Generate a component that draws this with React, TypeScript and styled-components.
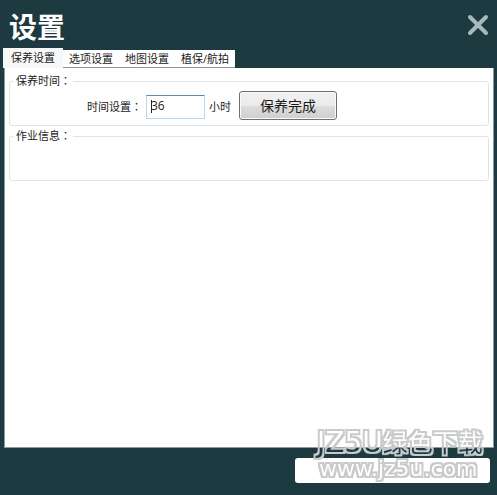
import React, { useState } from "react";
import styled, { createGlobalStyle } from "styled-components";

const GlobalStyle = createGlobalStyle`
  * { box-sizing: border-box; }
  html, body, #root { height: 100%; }
  body {
    margin: 0;
    background: #1d3a40;
    color: #1a1a1a;
    font: 11px/16px "Open Sans", "Noto Sans CJK SC", sans-serif;
  }
  button, input { font: inherit; color: inherit; }
`;

const Window = styled.main`
  display: flex;
  flex-direction: column;
  min-height: 100%;
  padding: 8px 3px 12px;
`;

const Header = styled.header`
  display: flex;
  align-items: center;
  justify-content: space-between;
  height: 40px;
  padding: 0 5px 2px 6px;
`;

const Title = styled.h1`
  margin: 0;
  color: #fff;
  font-size: 28px;
  line-height: 36px;
  font-weight: 700;
`;

const CloseButton = styled.button`
  display: flex;
  margin-bottom: 4px;
  padding: 0;
  border: 0;
  background: none;
  color: #a9b8bb;
  cursor: pointer;
`;

const TabList = styled.div`
  display: flex;
  align-items: flex-end;
  height: 20px;
`;

const Tab = styled.button<{ $active: boolean }>`
  height: ${(p) => (p.$active ? 20 : 18)}px;
  padding: 0 ${(p) => (p.$active ? 8 : 6)}px;
  border: 0;
  border-bottom: ${(p) => (p.$active ? "0" : "1px solid #8b9a9d")};
  background: ${(p) => (p.$active ? "#f8f8f8" : "#fff")};
  line-height: 16px;
  white-space: nowrap;

  &:first-child { width: 60px; }
`;

const Panel = styled.section`
  display: flex;
  flex: 1;
  flex-direction: column;
  gap: 2px;
  margin-left: 1px;
  padding: 5px 4px;
  border: 1px solid #8b9a9d;
  border-top: 0;
  background: #fff;
`;

const Group = styled.fieldset`
  min-width: 0;
  min-height: 53px;
  margin: 0;
  padding: 0 4px;
  border: 1px solid #dde5e9;
  border-radius: 3px;
`;

const Legend = styled.legend`
  padding: 0 2px;
`;

/* The traditional face centres the full-width colon in its square. */
const Colon = styled.span`
  font-family: "Noto Sans CJK TC", sans-serif;
  line-height: 1;
`;

const Row = styled.div`
  display: flex;
  align-items: center;
  padding: 2px 0 4px 73px;
`;

const HoursInput = styled.input`
  width: 59px;
  height: 24px;
  margin: 2px 4px 0;
  padding: 0 4px 2px;
  border: 1px solid #b5d9ee;
  border-top-color: #5a8ab5;
  background: linear-gradient(#222, #222) 4px 4px / 1px 13px no-repeat #fff;
  caret-color: transparent;
  font-size: 12px;
  outline: 0;
`;

const Unit = styled.span`
  padding-top: 2px;
`;

const HoursLabel = styled.label`
  padding-top: 2px;
`;

const DoneButton = styled.button`
  width: 98px;
  height: 29px;
  margin-left: 8px;
  padding: 0;
  border: 1px solid #707070;
  border-radius: 3px;
  background: linear-gradient(#f2f2f2 0%, #ebebeb 50%, #dddddd 51%, #cfcfcf 100%);
  box-shadow: inset 0 0 0 1px #fafafa;
  font-size: 14px;
`;

const Footer = styled.footer`
  position: relative;
  display: flex;
  justify-content: flex-end;
  padding: 10px 4px 0 0;
`;

const StatusField = styled.output`
  width: 40%;
  height: 25px;
  border-radius: 3px;
  background: #fff;
`;

const Watermark = styled.svg`
  position: absolute;
  right: 5px;
  bottom: 0;
  width: 176px;
  height: 56px;
  overflow: visible;
  pointer-events: none;
  font-family: "DejaVu Sans", "Noto Sans CJK SC", sans-serif;
`;

const tabs = ["保养设置", "选项设置", "地图设置", "植保/航拍"];

export default function App() {
  const [active, setActive] = useState(0);
  const [hours, setHours] = useState("36");

  return (
    <>
      <GlobalStyle />
      <Window>
        <Header>
          <Title>设置</Title>
          <CloseButton aria-label="关闭">
            <svg width="22" height="22" viewBox="0 0 22 22">
              <path d="M3 3L19 19M19 3L3 19" fill="none" stroke="currentColor" strokeWidth="4" strokeLinecap="round" />
            </svg>
          </CloseButton>
        </Header>
        <TabList role="tablist">
          {tabs.map((name, i) => (
            <Tab key={name} role="tab" aria-selected={i === active} $active={i === active} onClick={() => setActive(i)}>
              {name}
            </Tab>
          ))}
        </TabList>
        <Panel role="tabpanel">
          <Group>
            <Legend>保养时间<Colon>：</Colon></Legend>
            <Row>
              <HoursLabel htmlFor="hours">时间设置<Colon>：</Colon></HoursLabel>
              <HoursInput id="hours" value={hours} onChange={(e) => setHours(e.target.value)} />
              <Unit>小时</Unit>
              <DoneButton>保养完成</DoneButton>
            </Row>
          </Group>
          <Group>
            <Legend>作业信息<Colon>：</Colon></Legend>
          </Group>
        </Panel>
        <Footer>
          <StatusField />
          <Watermark viewBox="0 0 176 56">
            <filter id="outline" x="-5%" y="-20%" width="110%" height="140%" colorInterpolationFilters="sRGB">
              <feMorphology in="SourceAlpha" operator="dilate" radius="2" result="wide" />
              <feFlood floodColor="#c8cacb" />
              <feComposite in2="wide" operator="in" />
              <feComposite in2="SourceAlpha" operator="out" />
            </filter>
            <text x="4" y="25" fontSize="28" filter="url(#outline)">
              JZ5U<tspan fontSize="25">绿色下载</tspan>
            </text>
            <text x="6" y="49" fontSize="22" filter="url(#outline)">www.jz5u.com</text>
          </Watermark>
        </Footer>
      </Window>
    </>
  );
}
